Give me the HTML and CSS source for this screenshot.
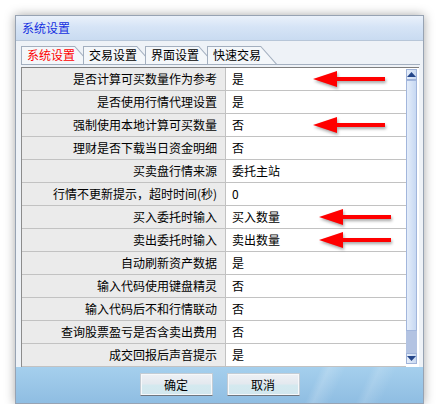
FILE: index.html
```html
<!DOCTYPE html>
<html lang="zh-CN">
<head>
    <meta charset="UTF-8">
    <title>系统设置</title>
    <link rel="stylesheet" href="styles.css">
</head>
<body>
    <div class="window">
        <div class="titlebar">系统设置</div>
        <div class="client">
            <div class="tabs">
                <div class="tab active">系统设置</div>
                <div class="tab">交易设置</div>
                <div class="tab">界面设置</div>
                <div class="tab">快速交易</div>
            </div>
            <div class="panel">
                <div class="grid">
                    <div class="row">
                        <div class="label">是否计算可买数量作为参考</div>
                        <div class="value">是
                            <svg class="arrow" width="74" height="18" viewBox="0 0 74 18"><polygon points="0,8 24,0 24,6 72,6 72,10 24,10 24,16"/></svg>
                        </div>
                    </div>
                    <div class="row">
                        <div class="label">是否使用行情代理设置</div>
                        <div class="value">是</div>
                    </div>
                    <div class="row">
                        <div class="label">强制使用本地计算可买数量</div>
                        <div class="value">否
                            <svg class="arrow" width="74" height="18" viewBox="0 0 74 18"><polygon points="0,8 24,0 24,6 72,6 72,10 24,10 24,16"/></svg>
                        </div>
                    </div>
                    <div class="row">
                        <div class="label">理财是否下载当日资金明细</div>
                        <div class="value">否</div>
                    </div>
                    <div class="row">
                        <div class="label">买卖盘行情来源</div>
                        <div class="value">委托主站</div>
                    </div>
                    <div class="row">
                        <div class="label">行情不更新提示，超时时间(秒)</div>
                        <div class="value">0</div>
                    </div>
                    <div class="row">
                        <div class="label">买入委托时输入</div>
                        <div class="value">买入数量
                            <svg class="arrow shift" width="74" height="18" viewBox="0 0 74 18"><polygon points="0,8 24,0 24,6 72,6 72,10 24,10 24,16"/></svg>
                        </div>
                    </div>
                    <div class="row">
                        <div class="label">卖出委托时输入</div>
                        <div class="value">卖出数量
                            <svg class="arrow shift" width="74" height="18" viewBox="0 0 74 18"><polygon points="0,8 24,0 24,6 72,6 72,10 24,10 24,16"/></svg>
                        </div>
                    </div>
                    <div class="row">
                        <div class="label">自动刷新资产数据</div>
                        <div class="value">是</div>
                    </div>
                    <div class="row">
                        <div class="label">输入代码使用键盘精灵</div>
                        <div class="value">否</div>
                    </div>
                    <div class="row">
                        <div class="label">输入代码后不和行情联动</div>
                        <div class="value">否</div>
                    </div>
                    <div class="row">
                        <div class="label">查询股票盈亏是否含卖出费用</div>
                        <div class="value">否</div>
                    </div>
                    <div class="row">
                        <div class="label">成交回报后声音提示</div>
                        <div class="value">是</div>
                    </div>
                </div>
                <div class="scrollbar">
                    <div class="sb-btn up"><svg width="9" height="5" viewBox="0 0 9 5"><polygon points="0,5 4.5,0 9,5"/></svg></div>
                    <div class="sb-thumb"></div>
                    <div class="sb-track"></div>
                    <div class="sb-btn down"><svg width="9" height="5" viewBox="0 0 9 5"><polygon points="0,0 4.5,5 9,0"/></svg></div>
                </div>
            </div>
            <div class="footer">
                <button class="btn">确定</button>
                <button class="btn">取消</button>
            </div>
        </div>
    </div>
</body>
</html>
```

FILE: styles.css
```css
* {
  margin: 0;
  padding: 0;
  box-sizing: border-box;
}

body {
  background: #fff;
  font-family: "Noto Sans CJK SC", "DejaVu Sans", sans-serif;
  font-size: 12px;
  color: #000;
}

/* Window frame */
.window {
  margin: 15px 0 0 15px;
  width: 409px;
  height: 389px;
  border: 1px solid #97a3b3;
  box-shadow: 0 0 10px rgba(0, 0, 0, 0.35);
  display: flex;
  flex-direction: column;
  background: #eef2f7;
}

.titlebar {
  height: 25px;
  padding-left: 6px;
  line-height: 24px;
  color: #1530e0;
  background: linear-gradient(to bottom, #eaf1fb 0%, #d6e4f6 45%, #c9dbf1 100%);
  border-bottom: 1px solid #b7c6d8;
}

.client {
  flex: 1;
  display: flex;
  flex-direction: column;
  padding-top: 5px;
}

/* Tabs */
.tabs {
  display: flex;
  height: 19px;
  margin: 0 3px 0 5px;
  border-bottom: 1px solid #a3afbf;
}

.tab {
  position: relative;
  width: 70px;
  height: 18px;
  margin-right: -8px;
  padding-left: 6px;
  line-height: 18px;
  background: #a3afbf;
  clip-path: polygon(0 0, 54px 0, 70px 18px, 0 18px);
}

.tab::before {
  content: '';
  position: absolute;
  inset: 0;
  background: #f4f7fa;
  clip-path: polygon(1px 1px, 53.6px 1px, 68.6px 18px, 1px 18px);
  z-index: -1;
}

.tab.active {
  color: #ff0000;
}

/* Property grid */
.panel {
  display: flex;
  margin: 2px 4px 0 5px;
  border-top: 1px solid #7e7e7e;
  border-left: 1px solid #8c8c8c;
  background: #fff;
}

.grid {
  width: 384px;
}

.row {
  display: flex;
  height: 23px;
  border-bottom: 1px solid #c2c2c2;
}

.label {
  width: 204px;
  padding-right: 8px;
  text-align: right;
  line-height: 22px;
  background: #ebebeb;
  border-right: 1px solid #c2c2c2;
  white-space: nowrap;
}

.value {
  position: relative;
  flex: 1;
  padding-left: 6px;
  line-height: 22px;
}

.arrow {
  position: absolute;
  left: 87px;
  top: 3px;
  fill: #ff0000;
  filter: drop-shadow(1px 2px 1.5px rgba(0, 0, 0, 0.35));
}

.arrow.shift {
  left: 93px;
}

/* Scrollbar */
.scrollbar {
  width: 13px;
  padding: 1px 1px 3px 0;
  display: flex;
  flex-direction: column;
  border-right: 1px solid #fff;
}

.sb-btn {
  height: 11px;
  display: flex;
  align-items: center;
  justify-content: center;
  border: 1px solid #9fb3d9;
  background: linear-gradient(to right, #e6eefa, #c9d9f1);
}

.sb-btn svg {
  fill: #24468a;
}

.sb-thumb {
  flex: 1;
  border: 1px solid #a2b6dc;
  background: linear-gradient(to right, #e4edfa, #c7d8f2);
}

.sb-track {
  height: 22px;
  background: #b3c3e2;
}

/* Buttons */
.footer {
  flex: 1;
  margin-top: 0;
  display: flex;
  justify-content: center;
  gap: 14px;
  padding-top: 6px;
  background:
    linear-gradient(115deg, transparent 72%, rgba(255, 255, 255, 0.18) 74%, transparent 78%, transparent 84%, rgba(255, 255, 255, 0.14) 86%, transparent 90%),
    linear-gradient(to bottom, #a5cfed, #8fbde2);
}

.btn {
  width: 73px;
  height: 23px;
  font-family: "Noto Sans CJK SC", "DejaVu Sans", sans-serif;
  font-size: 12px;
  color: #000;
  border: 1px solid #c3ccd4;
  border-bottom: 1px solid #6f7780;
  background: linear-gradient(to bottom, #eef1f5 0%, #e4e9ef 45%, #d4e9ef 55%, #d2e7ee 100%);
  box-shadow: inset 0 0 0 1px #f6f8fa;
}
```
